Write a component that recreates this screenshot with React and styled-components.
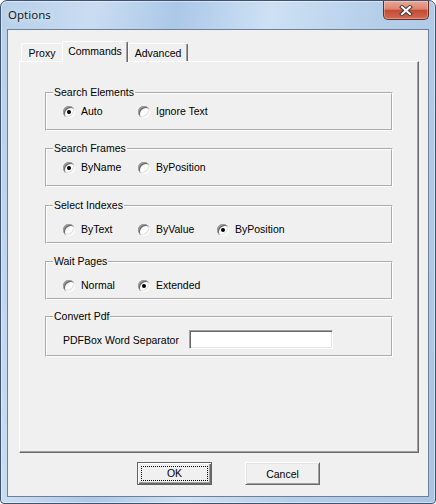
import React from "react";
import styled, { createGlobalStyle } from "styled-components";

const GlobalStyle = createGlobalStyle`
  html, body {
    margin: 0;
    padding: 0;
    background: #ffffff;
  }
  * {
    box-sizing: border-box;
  }
`;

const Window = styled.div`
  width: 436px;
  height: 504px;
  display: flex;
  flex-direction: column;
  border: 1px solid #3f5370;
  border-radius: 7px 7px 4px 4px;
  background: linear-gradient(
    100deg,
    #b7cfe9 0%,
    #c9ddf2 18%,
    #abc8e8 34%,
    #cde1f4 52%,
    #b5cfea 72%,
    #a8c5e6 100%
  );
  box-shadow: inset 0 0 0 1px rgba(255, 255, 255, 0.45);
  font-family: "Liberation Sans", Arial, sans-serif;
  font-size: 10.5px;
  color: #000;
`;

const TitleBar = styled.div`
  height: 28px;
  display: flex;
  align-items: flex-start;
  padding-left: 7px;
`;

const Title = styled.div`
  margin-top: 7px;
  font-family: "Noto Sans", "DejaVu Sans", sans-serif;
  font-size: 11.5px;
  line-height: 14px;
  color: #1a1a1a;
  text-shadow: 0 0 6px rgba(255, 255, 255, 0.9);
`;

const CloseButton = styled.div`
  margin-left: auto;
  margin-right: 6px;
  width: 46px;
  height: 19px;
  display: flex;
  align-items: center;
  justify-content: center;
  border: 1px solid #6b2b20;
  border-top: none;
  border-radius: 0 0 5px 5px;
  background: linear-gradient(
    180deg,
    #e9a796 0%,
    #dc8470 45%,
    #c64a33 52%,
    #d06b52 100%
  );
  box-shadow: inset 0 0 0 1px rgba(255, 255, 255, 0.3);
`;

const Client = styled.div`
  flex: 1;
  margin: 0 6px 6px 6px;
  border: 1px solid #6f8096;
  background: #f0f0f0;
  padding: 11px 9px 0 11px;
  display: flex;
  flex-direction: column;
`;

const TabStrip = styled.div`
  display: flex;
  align-items: flex-end;
  padding-left: 2px;
  height: 20px;
  position: relative;
  z-index: 1;
`;

const Tab = styled.div`
  width: ${(p) => p.w}px;
  height: ${(p) => (p.active ? 21 : 18)}px;
  margin-bottom: ${(p) => (p.active ? -1 : 0)}px;
  padding-top: 3px;
  line-height: 13px;
  text-align: center;
  background: #f0f0f0;
  border-top: 1px solid #ffffff;
  border-left: 1px solid #ffffff;
  border-right: ${(p) => (p.edge ? "1px solid #696969" : "none")};
  border-radius: 2px 2px 0 0;
  box-shadow: ${(p) => (p.edge ? "inset -1px 0 0 #a0a0a0" : "none")};
`;

const Panel = styled.div`
  height: 392px;
  border-top: 1px solid #ffffff;
  border-left: 1px solid #ffffff;
  border-right: 1px solid #696969;
  border-bottom: 1px solid #696969;
  box-shadow: inset -1px -1px 0 #a0a0a0;
  padding: 24px 25px 0 25px;
  display: flex;
  flex-direction: column;
`;

const Group = styled.fieldset`
  margin: ${(p) => p.gap || 0}px 0 0 0;
  min-width: 0;
  padding: ${(p) => p.top}px 0 ${(p) => p.bottom}px 0;
  border: 2px groove #ffffff;
`;

const Legend = styled.legend`
  margin-left: 6px;
  padding: 0 1px;
  line-height: 13px;
`;

const Row = styled.div`
  display: flex;
  align-items: center;
  padding-left: 16px;
  height: ${(p) => p.h || 13}px;
`;

const Option = styled.label`
  display: flex;
  align-items: center;
  width: ${(p) => p.w || 75}px;
  line-height: 13px;
`;

const Radio = styled.input.attrs({ type: "radio" })`
  appearance: none;
  margin: 0 6px 0 0;
  width: 12px;
  height: 12px;
  border-radius: 50%;
  background: #ffffff;
  position: relative;
  box-shadow: inset 1px 1px 0 #a0a0a0, inset -1px -1px 0 #ffffff,
    inset 2px 2px 0 #696969, inset -2px -2px 0 #e3e3e3;

  &:checked::after {
    content: "";
    position: absolute;
    left: 4px;
    top: 4px;
    width: 4px;
    height: 4px;
    border-radius: 50%;
    background: #000000;
  }
`;

const FieldLabel = styled.span`
  margin-right: 10px;
`;

const TextBox = styled.input`
  width: 144px;
  height: 19px;
  margin: 0;
  padding: 0 2px;
  border: 1px solid;
  border-color: #a0a0a0 #ffffff #ffffff #a0a0a0;
  box-shadow: inset 1px 1px 0 #696969, inset -1px -1px 0 #e3e3e3;
  background: #ffffff;
  font: inherit;
  outline: none;
`;

const ButtonRow = styled.div`
  display: flex;
  gap: 33px;
  padding-left: 118px;
  margin-top: 9px;
`;

const Button = styled.button`
  width: 75px;
  height: 23px;
  padding: 0;
  font: inherit;
  color: #000;
  background: #f0f0f0;
  display: flex;
  align-items: center;
  justify-content: center;
  border: 1px solid;
  border-color: ${(p) =>
    p.primary ? "#646464" : "#ffffff #696969 #696969 #ffffff"};
  box-shadow: ${(p) =>
    p.primary
      ? "inset 1px 1px 0 #ffffff, inset -1px -1px 0 #696969, inset -2px -2px 0 #a0a0a0"
      : "inset 1px 1px 0 #e3e3e3, inset -1px -1px 0 #a0a0a0"};
`;

const Focus = styled.span`
  width: 67px;
  height: 15px;
  border: 1px dotted #000;
  display: flex;
  align-items: center;
  justify-content: center;
  margin-top: -1px;
  line-height: 13px;
`;

const CloseIcon = () => (
  <svg width="14" height="11" viewBox="0 0 14 11">
    <path d="M3 2 L11 9 M11 2 L3 9" stroke="#3c3c3c" strokeWidth="4" strokeLinecap="square" />
    <path d="M3 2 L11 9 M11 2 L3 9" stroke="#ffffff" strokeWidth="2" strokeLinecap="square" />
  </svg>
);

const App = () => {
  return (
    <>
      <GlobalStyle />
      <Window>
        <TitleBar>
          <Title>Options</Title>
          <CloseButton>
            <CloseIcon />
          </CloseButton>
        </TitleBar>
        <Client>
          <TabStrip>
            <Tab w={41}>Proxy</Tab>
            <Tab w={66} active edge>
              Commands
            </Tab>
            <Tab w={60} edge>
              Advanced
            </Tab>
          </TabStrip>
          <Panel>
            <Group top={6} bottom={11}>
              <Legend>Search Elements</Legend>
              <Row>
                <Option>
                  <Radio name="elements" defaultChecked />
                  Auto
                </Option>
                <Option>
                  <Radio name="elements" />
                  Ignore Text
                </Option>
              </Row>
            </Group>
            <Group gap={11} top={6} bottom={11}>
              <Legend>Search Frames</Legend>
              <Row>
                <Option>
                  <Radio name="frames" defaultChecked />
                  ByName
                </Option>
                <Option>
                  <Radio name="frames" />
                  ByPosition
                </Option>
              </Row>
            </Group>
            <Group gap={12} top={11} bottom={6}>
              <Legend>Select Indexes</Legend>
              <Row>
                <Option>
                  <Radio name="indexes" />
                  ByText
                </Option>
                <Option w={79}>
                  <Radio name="indexes" />
                  ByValue
                </Option>
                <Option>
                  <Radio name="indexes" defaultChecked />
                  ByPosition
                </Option>
              </Row>
            </Group>
            <Group gap={11} top={11} bottom={6}>
              <Legend>Wait Pages</Legend>
              <Row>
                <Option>
                  <Radio name="wait" />
                  Normal
                </Option>
                <Option>
                  <Radio name="wait" defaultChecked />
                  Extended
                </Option>
              </Row>
            </Group>
            <Group gap={10} top={7} bottom={6}>
              <Legend>Convert Pdf</Legend>
              <Row h={19}>
                <FieldLabel>PDFBox Word Separator</FieldLabel>
                <TextBox />
              </Row>
            </Group>
          </Panel>
          <ButtonRow>
            <Button primary>
              <Focus>OK</Focus>
            </Button>
            <Button>Cancel</Button>
          </ButtonRow>
        </Client>
      </Window>
    </>
  );
};

export default App;
